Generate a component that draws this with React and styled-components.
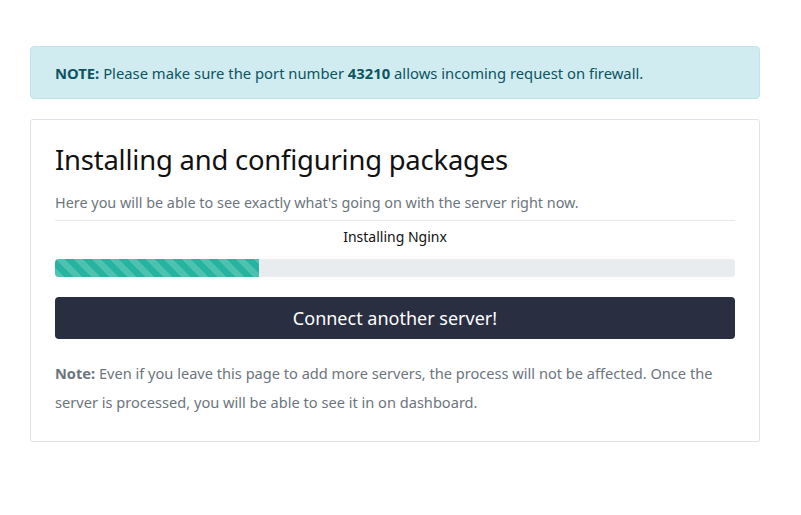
import React from 'react';
import styled, { createGlobalStyle } from 'styled-components';

const GlobalStyle = createGlobalStyle`
    body {
        margin: 0;
        background: #fff;
        font-family: "Noto Sans", "Open Sans", sans-serif;
    }
`;

const Page = styled.div`
    width: 730px;
    padding: 46px 0 0 30px;
    display: flex;
    flex-direction: column;
    gap: 20px;
`;

const Alert = styled.div`
    box-sizing: border-box;
    height: 53px;
    padding: 0 24px;
    display: flex;
    align-items: center;
    background: #d1ecf1;
    border: 1px solid #bee5eb;
    border-radius: 4px;
    color: #0c5460;
    font-size: 14.8px;
`;

const Card = styled.div`
    box-sizing: border-box;
    border: 1px solid #dfe2e6;
    border-radius: 3px;
    padding: 22px 24px 24px;
    display: flex;
    flex-direction: column;
`;

const Title = styled.h1`
    margin: 0;
    font-size: 27.4px;
    font-weight: 400;
    line-height: 36px;
    color: #111;
    letter-spacing: -0.2px;
`;

const Lead = styled.p`
    margin: 15px 0 0;
    font-size: 14.4px;
    line-height: 20px;
    color: #6c757d;
    padding-bottom: 7px;
    border-bottom: 1px solid #e6e8eb;
`;

const Step = styled.div`
    margin-top: 6px;
    text-align: center;
    font-size: 14px;
    line-height: 20px;
    color: #111;
`;

const Track = styled.div`
    margin-top: 12px;
    height: 18px;
    background: #e9ecef;
    border-radius: 4px;
    overflow: hidden;
`;

const Fill = styled.div`
    height: 100%;
    background-color: #26b4a0;
    background-image: linear-gradient(
        45deg,
        rgba(255, 255, 255, 0.18) 25%,
        transparent 25%,
        transparent 50%,
        rgba(255, 255, 255, 0.18) 50%,
        rgba(255, 255, 255, 0.18) 75%,
        transparent 75%,
        transparent
    );
    background-size: 18px 18px;
`;

const Button = styled.button`
    margin-top: 20px;
    height: 42px;
    border: none;
    border-radius: 4px;
    background: #292e40;
    color: #fff;
    font-family: inherit;
    font-size: 18px;
    cursor: pointer;
`;

const Footnote = styled.p`
    margin: 20px 0 0;
    font-size: 14.6px;
    line-height: 29px;
    color: #6c757d;
`;

const App = () => {
    const progress = 30;
    return (
        <>
            <GlobalStyle />
            <Page>
                <Alert>
                    <span>
                        <b>NOTE:</b> Please make sure the port number <b>43210</b> allows incoming request on firewall.
                    </span>
                </Alert>
                <Card>
                    <Title>Installing and configuring packages</Title>
                    <Lead>Here you will be able to see exactly what's going on with the server right now.</Lead>
                    <Step>Installing Nginx</Step>
                    <Track>
                        <Fill style={{ width: progress + '%' }} />
                    </Track>
                    <Button>Connect another server!</Button>
                    <Footnote>
                        <b>Note:</b> Even if you leave this page to add more servers, the process will not be affected. Once the server is processed, you will be able to see it in on dashboard.
                    </Footnote>
                </Card>
            </Page>
        </>
    );
};

export default App;
